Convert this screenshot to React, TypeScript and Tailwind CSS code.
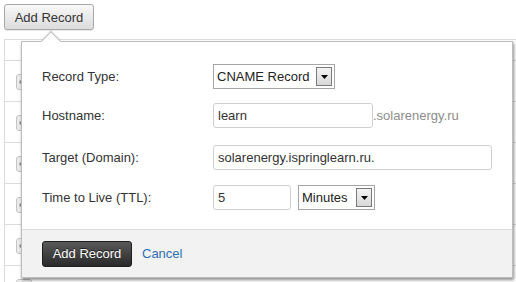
import React from "react";

const font = { fontFamily: '"Liberation Sans", Arial, sans-serif' };

function ExpandIcon() {
  return (
    <div className="w-[16px] h-[16px] rounded-[3px] border border-[#c4c4c4] bg-[#ececec] flex items-center justify-center">
      <svg width="10" height="10" viewBox="0 0 10 10">
        <path d="M3.5 0.5h3v3h3v3h-3v3h-3v-3h-3v-3h3z" fill="#8a8a8a" />
      </svg>
    </div>
  );
}

function SelectBox({ label, width }: { label: string; width: string }) {
  return (
    <div className={`${width} h-[25px] border border-[#a5a5a5] bg-white flex items-center justify-between pl-[3px] pr-[2px]`}>
      <span className="text-[13px] text-[#222] whitespace-nowrap">{label}</span>
      <div className="w-[16px] h-[19px] border border-[#7a7a7a] bg-gradient-to-b from-[#f4f4f4] to-[#d8d8d8] flex items-center justify-center">
        <svg width="7" height="4" viewBox="0 0 7 4">
          <path d="M0 0h7L3.5 4z" fill="#000" />
        </svg>
      </div>
    </div>
  );
}

export default function App() {
  const rows = [0, 1, 2, 3, 4, 5];
  return (
    <div className="relative w-[516px] h-[282px] overflow-hidden bg-white" style={font}>
      <div className="pl-[4px] pt-[4px]">
        <button className="w-[90px] h-[26px] rounded-[3px] border border-[#a8a8a8] bg-gradient-to-b from-[#f8f8f8] to-[#dcdcdc] text-[13px] text-[#333] leading-none shadow-[0_1px_1px_rgba(0,0,0,0.1)]">
          Add Record
        </button>
      </div>
      {/* background table */}
      <div className="ml-[4px] mt-[9px] border-l border-[#dcdcdc]">
        <div className="h-[21px] border-t border-[#dcdcdc]" />
        {rows.map((r) => (
          <div key={r} className="h-[41px] border-t border-[#dcdcdc] flex items-start pt-[13px] pl-[11px]">
            <ExpandIcon />
            {r === 5 && (
              <>
                <div className="ml-[30px] mt-[5px] text-[13px] text-[#333] w-[220px]">www.solarenergy.ru</div>
                <div className="ml-[90px] mt-[5px] text-[13px] text-[#333]">00.100.000.100</div>
              </>
            )}
          </div>
        ))}
      </div>

      {/* popover */}
      <div className="absolute left-[21px] top-[41px] w-[492px] h-[237px] bg-white border border-[#bdbdbd] shadow-[1px_2px_3px_rgba(0,0,0,0.45)] text-[13px] text-[#333]">
        <div className="absolute left-[22px] top-[-8px] w-[14px] h-[14px] rotate-45 bg-white border-l border-t border-[#bdbdbd] shadow-[-1px_-1px_1px_rgba(0,0,0,0.08)]" />
        <div className="relative pt-[22px] pl-[20px] flex flex-col gap-[14px]">
          <div className="flex items-center h-[25px]">
            <div className="w-[171px]">Record Type:</div>
            <SelectBox label="CNAME Record" width="w-[122px]" />
          </div>
          <div className="flex items-center h-[25px]">
            <div className="w-[171px]">Hostname:</div>
            <div className="w-[160px] h-[25px] rounded-[3px] border border-[#cfcfcf] flex items-center pl-[4px] text-[13px]">learn</div>
            <span className="text-[13px] text-[#8d8d8d]">.solarenergy.ru</span>
          </div>
          <div className="flex items-center h-[25px] mt-[3px]">
            <div className="w-[171px]">Target (Domain):</div>
            <div className="w-[279px] h-[25px] rounded-[3px] border border-[#cfcfcf] flex items-center pl-[4px] text-[13px]">solarenergy.ispringlearn.ru.</div>
          </div>
          <div className="flex items-center h-[25px] mt-[1px]">
            <div className="w-[171px]">Time to Live (TTL):</div>
            <div className="w-[78px] h-[25px] rounded-[3px] border border-[#cfcfcf] flex items-center pl-[4px] text-[13px]">5</div>
            <div className="ml-[7px]">
              <SelectBox label="Minutes" width="w-[77px]" />
            </div>
          </div>
        </div>
        <div className="absolute left-0 right-0 bottom-0 h-[48px] bg-[#f2f2f2] border-t border-[#dcdcdc] flex items-center pl-[20px]">
          <button className="w-[90px] h-[26px] rounded-[3px] border border-[#1e1e1e] bg-gradient-to-b from-[#5a5a5a] to-[#2a2a2a] text-white text-[13px] leading-none [text-shadow:0_-1px_0_rgba(0,0,0,0.6)]">
            Add Record
          </button>
          <span className="ml-[10px] text-[13px] text-[#2f6fb5]">Cancel</span>
        </div>
      </div>
    </div>
  );
}
